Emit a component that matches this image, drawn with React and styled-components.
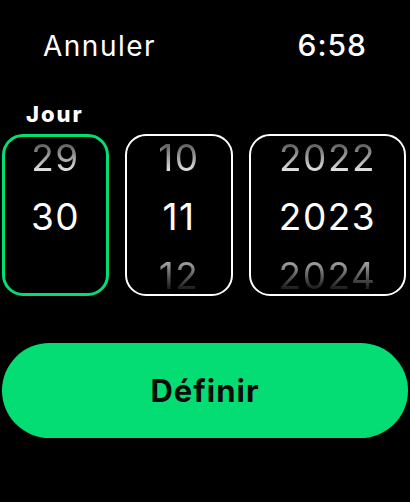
import React from 'react'
import styled, { createGlobalStyle } from "styled-components";

const Global = createGlobalStyle`
  html, body {
    margin: 0;
    padding: 0;
    background: #000;
  }
  body {
    font-family: Inter, "Open Sans", sans-serif;
    color: #fff;
  }
`;

const Screen = styled.div`
  width: 410px;
  height: 502px;
  background: #000;
  display: flex;
  flex-direction: column;
  overflow: hidden;
`;

const Header = styled.div`
  box-sizing: border-box;
  height: 59px;
  padding: 31px 43px 0 43px;
  display: flex;
  justify-content: space-between;
  align-items: baseline;
`;

const Cancel = styled.span`
  font-size: 28px;
  line-height: 28px;
  letter-spacing: 1.5px;
  font-weight: 400;
`;

const Clock = styled.span`
  font-size: 30px;
  line-height: 28px;
  font-weight: 500;
  letter-spacing: 1px;
`;

const Label = styled.div`
  margin: 44px 0 0 26px;
  font-size: 22px;
  line-height: 22px;
  font-weight: 800;
  letter-spacing: 2px;
`;

const Pickers = styled.div`
  margin: 9px 0 0 2px;
  display: flex;
  gap: 16px;
`;

const Wheel = styled.div`
  box-sizing: border-box;
  width: ${p => p.$width}px;
  height: 162px;
  border: ${p => (p.$active ? "3px solid #04dd74" : "2px solid #fff")};
  border-radius: 21px;
  overflow: hidden;
  display: flex;
  flex-direction: column;
  justify-content: center;
  align-items: center;
`;

const Item = styled.div`
  flex: none;
  height: 59px;
  line-height: 61px;
  font-size: 37px;
  font-weight: 400;
  letter-spacing: 1.5px;
  text-align: center;
  color: ${p => (p.$pos === "mid" ? "#fff" : "transparent")};
  background: ${p =>
    p.$pos === "top"
      ? "linear-gradient(to bottom, #444 20%, #e4e4e4 75%)"
      : p.$pos === "bottom"
      ? "linear-gradient(to bottom, #b0b0b0 25%, #222 72%)"
      : "none"};
  -webkit-background-clip: text;
  background-clip: text;
`;

const SetButton = styled.button`
  margin: 47px 0 0 2px;
  width: 406px;
  height: 95px;
  border: none;
  border-radius: 48px;
  background: #04dd74;
  color: #0a0a0a;
  font-family: Inter, "Open Sans", sans-serif;
  font-size: 31px;
  font-weight: 700;
  letter-spacing: 1px;
  padding: 0;
`;

const wheels = [
  { width: 107, active: true, values: ["29", "30", ""] },
  { width: 108, active: false, values: ["10", "11", "12"] },
  { width: 157, active: false, values: ["2022", "2023", "2024"] },
];

const positions = ["top", "mid", "bottom"];

export default function App() {
  return (
    <>
      <Global />
      <Screen>
        <Header>
          <Cancel>Annuler</Cancel>
          <Clock>6:58</Clock>
        </Header>
        <Label>Jour</Label>
        <Pickers>
          {wheels.map((w, i) => (
            <Wheel key={i} $width={w.width} $active={w.active}>
              {w.values.map((v, j) => (
                <Item key={j} $pos={positions[j]}>{v}</Item>
              ))}
            </Wheel>
          ))}
        </Pickers>
        <SetButton>Définir</SetButton>
      </Screen>
    </>
  )
}
